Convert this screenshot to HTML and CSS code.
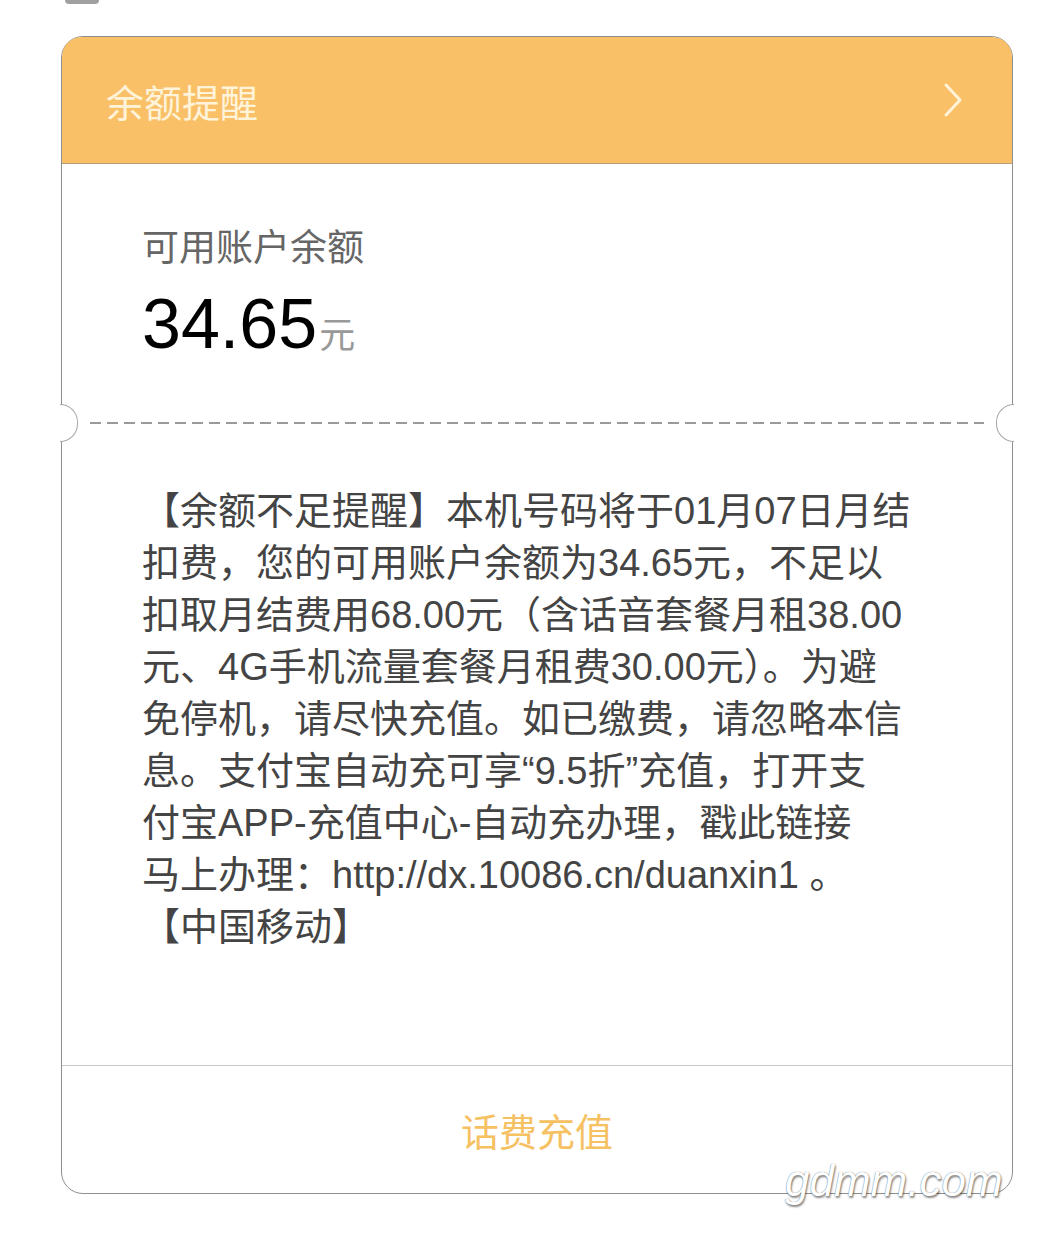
FILE: index.html
```html
<!DOCTYPE html>
<html lang="zh-CN">
<head>
  <meta charset="UTF-8" />
  <meta name="viewport" content="width=device-width, initial-scale=1.0" />
  <title>余额提醒</title>
  <link rel="stylesheet" href="styles.css">
</head>
<body>
  <div class="prev-tab"></div>

  <div class="card">
    <div class="card-head">
      <span class="card-title">余额提醒</span>
      <svg class="chevron" width="22" height="36" viewBox="0 0 22 36">
        <polyline points="4,3 18,18 4,33" fill="none" stroke="#fff3d9" stroke-width="3" stroke-linecap="round" stroke-linejoin="round" />
      </svg>
    </div>

    <div class="balance">
      <div class="balance-label">可用账户余额</div>
      <div class="balance-amount">34.65<span class="unit">元</span></div>
    </div>

    <div class="tear">
      <span class="notch notch-left"></span>
      <div class="dash"></div>
      <span class="notch notch-right"></span>
    </div>

    <div class="message">
      <p>【余额不足提醒】本机号码将于01月07日月结<br>扣费，您的可用账户余额为34.65元，不足以<br>扣取月结费用68.00元（含话音套餐月租38.00<br>元、4G手机流量套餐月租费30.00元）。为避<br>免停机，请尽快充值。如已缴费，请忽略本信<br>息。支付宝自动充可享“9.5折”充值，打开支<br>付宝APP-充值中心-自动充办理，戳此链接<br>马上办理：http://dx.10086.cn/duanxin1 。<br>【中国移动】</p>
    </div>

    <div class="action">话费充值</div>
  </div>

  <div class="watermark">gdmm.com</div>
</body>
</html>
```

FILE: styles.css
```css
body {
  margin: 0;
  background: #fff;
  font-family: "Liberation Sans", "Noto Sans CJK SC", sans-serif;
  position: relative;
  min-height: 1246px;
}
.prev-tab {
  width: 34px;
  height: 4px;
  margin-left: 65px;
  background: #a0a0a0;
  border-radius: 0 0 8px 8px;
}
.card {
  margin: 32px 0 0 61px;
  width: 952px;
  box-sizing: border-box;
  border: 1.5px solid #8e8e8e;
  border-radius: 22px;
  background: #fff;
}
.card-head {
  height: 126px;
  background: #f9c068;
  border-radius: 20px 20px 0 0;
  border-bottom: 1px solid #b79f78;
  display: flex;
  align-items: center;
  justify-content: space-between;
  padding: 0 48px 0 44px;
}
.card-title {
  font-size: 38px;
  color: #fff3d9;
}
.balance {
  padding: 60px 0 58px 80px;
}
.balance-label {
  height: 50px;
  font-size: 37px;
  line-height: 50px;
  color: #666;
}
.balance-amount {
  height: 80px;
  margin-top: 10px;
  font-size: 70px;
  line-height: 80px;
  color: #000;
}
.unit {
  font-size: 36px;
  line-height: 1;
  color: #999;
  margin-left: 2px;
}
.tear {
  position: relative;
  padding: 0 28px;
}
.dash {
  height: 1.5px;
  background-image: linear-gradient(to right, #9a9a9a 62%, transparent 0);
  background-size: 17px 1.5px;
}
.notch {
  position: absolute;
  top: -18px;
  width: 17px;
  height: 36px;
  background: #fff;
  border: 1.5px solid #a8a8a8;
}
.notch-left {
  left: -2px;
  border-left: none;
  border-radius: 0 18px 18px 0;
}
.notch-right {
  right: -2px;
  border-right: none;
  border-radius: 18px 0 0 18px;
}
.message {
  padding: 61px 0 112px 80px;
}
.message p {
  margin: 0;
  font-size: 38px;
  line-height: 52px;
  color: #444;
  white-space: nowrap;
}
.action {
  height: 127px;
  border-top: 1.5px solid #c8c8c8;
  display: flex;
  align-items: center;
  justify-content: center;
  font-size: 38px;
  color: #f6c163;
}
.watermark {
  position: absolute;
  left: 785px;
  top: 1156px;
  font-size: 44px;
  font-style: italic;
  color: #fff;
  text-shadow: 0 0 1px #555, 1px 2px 2px rgba(0, 0, 0, 0.45);
}
```
